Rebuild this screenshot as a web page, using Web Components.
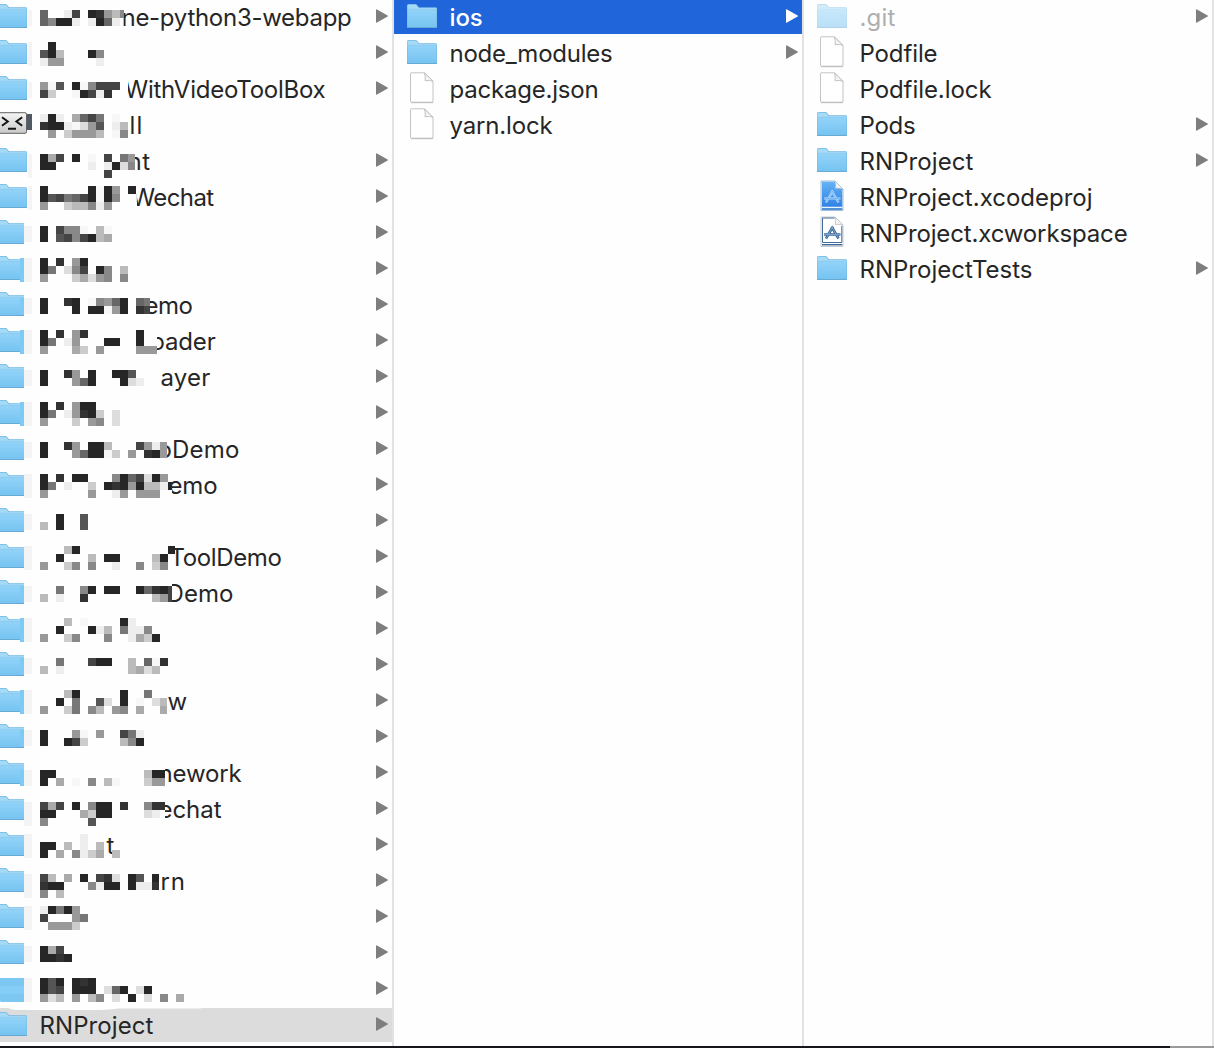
<!DOCTYPE html>
<html lang="en">
<head>
<meta charset="utf-8">
<title>RNProject</title>
<style>
  body {
    margin: 0;
    width: 1214px;
    height: 1048px;
    overflow: hidden;
    background: #fefefe;
    font-family: Inter, "Liberation Sans", sans-serif;
    font-size: 24px;
    font-optical-sizing: none;
    color: #262626;
  }
</style>
</head>
<body>
<finder-browser>
  <finder-column>
    <finder-item arrow smudge="28" seam="83.5" start="82" width="230" mosaic="6..e4.239b8/6822e.e26e">ne-python3-webapp</finder-item>
    <finder-item arrow smudge="28" mosaic=".2/52b...28/e99....e"></finder-item>
    <finder-item arrow smudge="28" seam="88" start="85" width="201" mosaic="9f5.2f8444/4c..f24e3">WithVideoToolBox</finder-item>
    <finder-item kind="terminal" start="90" width="14" mosaic="e2e.a647.f/322efd95.eb/.9.c999b.f8">ll</finder-item>
    <finder-item arrow smudge="28" seam="95" start="88" width="23" mosaic="2a4.2.f.4.79/22....e.e2d8/........4">nt</finder-item>
    <finder-item arrow smudge="28" seam="97" start="92" width="82" mosaic="2.....2f29.2/2547642f28..d/9..cbb8e9">Wechat</finder-item>
    <finder-item arrow smudge="24" mosaic="2.488f.bf/2.54842ba"></finder-item>
    <finder-item arrow smudge="24" blot mosaic="2.3.92/27.d84.28.b/9...cad98.8"></finder-item>
    <finder-item arrow smudge="24" blot seam="110" start="105" width="48" mosaic="2..32.f8962.67/2...2.22f92.34">emo</finder-item>
    <finder-item arrow smudge="24" blot seam="117" start="111" width="65" mosaic="2.3.93......2/27.e9...22..2/9...ac.9....999">oader</finder-item>
    <finder-item arrow smudge="24" seam="120" start="121" width="50" mosaic="2..39.2..225/2...962...2de">ayer</finder-item>
    <finder-item arrow smudge="24" blot mosaic="2.3.922/27.e932c.d/9...c.98.d"></finder-item>
    <finder-item arrow smudge="24" seam="127" start="118" width="82" mosaic="2..39.22b...49e9/2...9622fc.9.329">oDemo</finder-item>
    <finder-item arrow smudge="24" seam="132" start="129" width="49" mosaic="2.3.22...8264d29/27.e..c.23292bbe2/9.....9..e9.999">emo</finder-item>
    <finder-item arrow smudge="24" mosaic="..2..5/b.2..5"></finder-item>
    <finder-item arrow smudge="24" seam="135" start="130" width="112" mosaic="...b2...........22/..2...b.22....b2/9..c8.8..e..8.c8">ToolDemo</finder-item>
    <finder-item arrow smudge="24" blot seam="132" start="127" width="67" mosaic="..7..82.22..26324/b.e..3........b94">Demo</finder-item>
    <finder-item arrow smudge="24" blot mosaic="...b.f....2e/..2...2eb.7ee8/9..c8...8..eac2"></finder-item>
    <finder-item arrow smudge="24" blot mosaic="..7...422..b.6f3/b.e........badb"></finder-item>
    <finder-item arrow smudge="24" blot seam="127" start="128" width="19" mosaic="...b2.....2..7/..2.7..5d.2.f.db/9..c7.8b.98.a..a">w</finder-item>
    <finder-item arrow smudge="24" blot mosaic="2...9f.9..47e/2..24c....b82"></finder-item>
    <finder-item arrow smudge="24" blot top="14" seam="125" start="119" width="83" mosaic="22...........b22/2.a.f.8.bf...c99">nework</finder-item>
    <finder-item arrow smudge="24" seam="125" start="119" width="63" mosaic="4a4.2.822.3..833/22...ac22....de/8.....5">echat</finder-item>
    <finder-item arrow smudge="24" start="67" width="9" mosaic=".....e/22.b.e.b/2.a.8eca.b">t</finder-item>
    <finder-item arrow smudge="24" seam="119" start="107" width="39" mosaic="4b.a.2.43d.25.2/322...8e22.2ee3/8.b">arn</finder-item>
    <finder-item arrow smudge="24" mosaic="e2729/4...97/.999c"></finder-item>
    <finder-item arrow smudge="24" mosaic="2a4/2232"></finder-item>
    <finder-item arrow smudge="24" kind="block" mosaic="252.232/254.222.d62.d2/9db.9.b8.d.2.d.8.a"></finder-item>
    <finder-item arrow current start="0" width="114">RNProject</finder-item>
  </finder-column>
  <finder-column>
    <finder-item arrow selected width="33">ios</finder-item>
    <finder-item arrow width="163">node_modules</finder-item>
    <finder-item kind="document" width="149">package.json</finder-item>
    <finder-item kind="document" width="103">yarn.lock</finder-item>
  </finder-column>
  <finder-column>
    <finder-item arrow hidden-file width="36">.git</finder-item>
    <finder-item kind="document" width="78">Podfile</finder-item>
    <finder-item kind="document" width="132">Podfile.lock</finder-item>
    <finder-item arrow width="56">Pods</finder-item>
    <finder-item arrow width="114">RNProject</finder-item>
    <finder-item kind="xcodeproj" width="233">RNProject.xcodeproj</finder-item>
    <finder-item kind="xcworkspace" width="268">RNProject.xcworkspace</finder-item>
    <finder-item arrow width="173">RNProjectTests</finder-item>
  </finder-column>
</finder-browser>

<script>
const ICONS = {
  folder: `
    <defs>
      <linearGradient id="front" x1="0" y1="0" x2="0" y2="1">
        <stop offset="0" stop-color="#93d3f8"/><stop offset="1" stop-color="#76c4f2"/>
      </linearGradient>
    </defs>
    <path d="M0 28V5.5Q0 4 1.5 4H8.5Q9.5 4 10.2 5L12 7.2H28.5Q30 7.2 30 8.6V28Z" fill="#72b8e2"/>
    <path d="M.5 10V5.6Q.5 4.7 1.5 4.7H8.3Q9 4.7 9.6 5.5L11.6 7.9H28.5Q29.5 7.9 29.5 8.8V10Z" fill="#a6daf5"/>
    <path d="M.5 9.4H29.5V27H.5Z" fill="url(#front)"/>
    <path d="M.5 9.3H29.5" stroke="#7fc4ee" stroke-width=".6"/>
    <path d="M0 27.5H30" stroke="#69aad2"/>`,
  block: `
    <path d="M0 6H30V28Q30 30 28 30H4L0 27Z" fill="#7dc8f3"/>
    <path d="M0 14H30V22H0Z" fill="#83cdf6"/>`,
  document: `
    <path d="M4 .8H17.5L26 9.3V30.2H4Q3.5 30.2 3.5 29.5V1.5Q3.5 .8 4 .8Z" fill="#fff" stroke="#c4c4c4"/>
    <path d="M4 30.7H26" stroke="#b4b4b4" stroke-width=".8"/>
    <path d="M17.5 1Q18.8 5 18 8.7Q23 8 26 9.3Z" fill="#f4f4f4" stroke="#bcbcbc" stroke-width=".9"/>`,
  xcodeproj: `
    <defs>
      <linearGradient id="blue" x1="0" y1="0" x2="0" y2="1">
        <stop offset="0" stop-color="#66b2f5"/><stop offset="1" stop-color="#2f83e4"/>
      </linearGradient>
    </defs>
    <path d="M4 1H18L26 9V30.5H4Z" fill="#e9f4ff" stroke="#8dafd0" stroke-width=".8"/>
    <path d="M5 1.8H17.8L25.2 9.2V26.7H5Z" fill="url(#blue)"/>
    <path d="M5 28.2H25.2V29.8H5Z" fill="#2a78cf"/>
    <path d="M18 1Q19 5 18.3 8.4Q22 8 26 9Z" fill="#edf3f8" stroke="#a6b7c7" stroke-width=".7"/>
    <g fill="none" stroke="#b5dcfc" stroke-width="2.2"><path d="M16 10.5L9 22.5M14.5 10.5L21.5 22.5M7 18.5H23.5"/></g>
    <g fill="none" stroke="#5ba4ee" stroke-width=".6"><path d="M16 10.5L9 22.5M14.5 10.5L21.5 22.5M7 18.5H23.5"/></g>`,
  xcworkspace: `
    <path d="M4 1H18L26 9V30.5H4Z" fill="#fff" stroke="#b9bdc3" stroke-width=".8"/>
    <path d="M17.5 2H5.5V26.5H24.8V10" fill="none" stroke="#426b9e"/>
    <path d="M5 28.7H25.3" stroke="#3b6496" stroke-width="1.4"/>
    <path d="M18 1Q19 5 18.3 8.4Q22 8 26 9Z" fill="#f4f4f4" stroke="#b6bac0" stroke-width=".8"/>
    <g fill="none" stroke="#3c689c" stroke-width="2.6"><path d="M16 10.5L9 22.5M14.5 10.5L21.5 22.5M7 18.5H23.5"/></g>
    <g fill="none" stroke="#a8c9e8" stroke-width=".6"><path d="M16 10.5L9 22.5M14.5 10.5L21.5 22.5M7 18.5H23.5"/></g>`,
  terminal: `
    <defs>
      <linearGradient id="metal" x1="0" y1="0" x2="0" y2="1">
        <stop offset="0" stop-color="#f5f5f5"/><stop offset="1" stop-color="#c9c9c9"/>
      </linearGradient>
    </defs>
    <path d="M29 6H35V22H29Z" fill="#4e5964"/>
    <rect x="-2" y="4.7" width="31.5" height="20.6" rx="1.5" fill="url(#metal)" stroke="#626262"/>
    <path d="M5 9.2L10.8 13.5L5 17.8M25.2 9.2L19.4 13.5L25.2 17.8M11 20.8H19" fill="none" stroke="#141414" stroke-width="2"/>`
};

class FileIcon extends HTMLElement {
  connectedCallback() {
    const kind = this.getAttribute('kind') || 'folder';
    this.attachShadow({ mode: 'open' }).innerHTML = `
      <style>
        :host { display: block; width: 30px; height: 34px; }
        svg { display: block; overflow: visible; }
      </style>
      <svg width="30" height="34" viewBox="0 0 30 34">${ICONS[kind]}</svg>
    `;
  }
}

// One hex digit per 8px cell (grey level), "." for an empty cell, "/" for a new line
class MosaicStrip extends HTMLElement {
  connectedCallback() {
    const rects = this.getAttribute('cells').split('/').map((line, y) =>
      [...line].map((c, x) => c === '.'
        ? ''
        : `<rect x="${x * 8}" y="${y * 8}" width="8" height="8" fill="${this.grey(c)}"/>`
      ).join('')).join('');
    this.attachShadow({ mode: 'open' }).innerHTML = `
      <style>
        :host { display: block; overflow: hidden; }
        svg { display: block; }
      </style>
      <svg width="160" height="24" shape-rendering="crispEdges">${rects}</svg>
    `;
  }

  grey(c) {
    if (c === 'f') return '#f7f7f7';
    if (c === '2') return '#262626';
    return `#${c.repeat(3)}`;
  }
}

class FinderItem extends HTMLElement {
  connectedCallback() {
    const attr = (name) => this.getAttribute(name);
    const cells = attr('mosaic');
    const lines = cells ? cells.split('/').length : 0;
    // rows are 36px apart and the cells sit on an 8px grid, so the offset alternates
    const index = [...this.parentNode.children].indexOf(this);
    const y = attr('top') || (index % 2 ? 6 : 10);
    const start = Number(attr('start') || 0);
    const seam = attr('seam');
    const smudge = attr('smudge');

    this.attachShadow({ mode: 'open' }).innerHTML = `
      <style>
        :host { display: block; height: 36px; }
        .row {
          position: relative;
          display: grid;
          grid-template-columns: 30px 1fr 12px;
          column-gap: 13px;
          height: 34px;
          padding: 0 4px 0 13px;
        }
        :host([selected]) .row { background: #2065d9; color: #fff; font-weight: 500; }
        :host([current]) .row { background: #dcdcdc; }
        :host([hidden-file]) file-icon { opacity: .5; }
        :host([hidden-file]) .label { color: #afafaf; }
        ${smudge === '24' ? 'file-icon { clip-path: inset(0 3px 0 0); }' : ''}
        .label { position: relative; min-width: 0; }
        .text {
          display: block;
          width: max-content;
          margin-left: ${start - 0.5}px;
          line-height: 35px;
          white-space: nowrap;
          ${seam ? `clip-path: inset(0 -4px 0 ${seam - start + 0.5}px);` : ''}
        }
        mosaic-strip {
          position: absolute;
          left: 0;
          top: ${y}px;
          ${seam ? `width: ${seam}px;` : ''}
        }
        .smudge {
          position: absolute;
          left: ${Number(smudge) + 16}px;
          top: ${y}px;
          width: ${32 - smudge}px;
          height: ${lines * 8}px;
          background: #f4f4f5;
        }
        .blot {
          position: absolute;
          left: 36px;
          top: ${y}px;
          width: 4px;
          height: ${lines * 8}px;
          background: #7dcaf5;
        }
        .arrow { grid-column: 3; padding-top: 9px; fill: #7e7e7e; }
        :host([selected]) .arrow { fill: #fff; }
      </style>
      <div class="row">
        <file-icon kind="${attr('kind') || 'folder'}"></file-icon>
        <div class="label">
          <span class="text"><slot></slot></span>
          ${cells ? `<mosaic-strip cells="${cells}"></mosaic-strip>` : ''}
        </div>
        ${this.hasAttribute('arrow') ? '<svg class="arrow" width="12" height="14"><path d="M0 .8Q0 0 1 .4L11.6 6.4Q12.4 7 11.6 7.6L1 13.6Q0 14 0 13.2Z"/></svg>' : ''}
        ${smudge ? '<i class="smudge"></i>' : ''}
        ${this.hasAttribute('blot') ? '<i class="blot"></i>' : ''}
      </div>
    `;
    this.fit();
  }

  // Tracks the label so that it takes the given width
  fit() {
    const width = Number(this.getAttribute('width'));
    const length = this.textContent.length;
    if (!width || !length) return;
    const text = this.shadowRoot.querySelector('.text');
    const natural = text.getBoundingClientRect().width;
    text.style.letterSpacing = `${(width - natural) / length}px`;
  }
}

class FinderColumn extends HTMLElement {
  connectedCallback() {
    this.attachShadow({ mode: 'open' }).innerHTML = `
      <style>
        :host {
          display: block;
          box-sizing: border-box;
          width: 410px;
          height: 1046px;
          border-right: 2px solid #e2e2e2;
        }
      </style>
      <slot></slot>
    `;
  }
}

class FinderBrowser extends HTMLElement {
  connectedCallback() {
    this.attachShadow({ mode: 'open' }).innerHTML = `
      <style>
        :host { display: block; position: relative; width: 1214px; height: 1048px; overflow: hidden; }
        .columns { display: grid; grid-template-columns: repeat(3, 410px); margin-left: -16px; }
        .edge { height: 2px; background: linear-gradient(90deg, #17171b 1170px, #999 1170px); }
        .sweep { position: absolute; left: 0; top: 1006px; }
      </style>
      <div class="columns"><slot></slot></div>
      <div class="edge"></div>
      <svg class="sweep" width="210" height="5"><path d="M6 0H207Q203 3 194 2.5H118Q106 4 90 4H18Q9 4 6 0Z" fill="#fefefe"/></svg>
    `;
  }
}

customElements.define('file-icon', FileIcon);
customElements.define('mosaic-strip', MosaicStrip);
customElements.define('finder-item', FinderItem);
customElements.define('finder-column', FinderColumn);
customElements.define('finder-browser', FinderBrowser);
</script>
</body>
</html>
